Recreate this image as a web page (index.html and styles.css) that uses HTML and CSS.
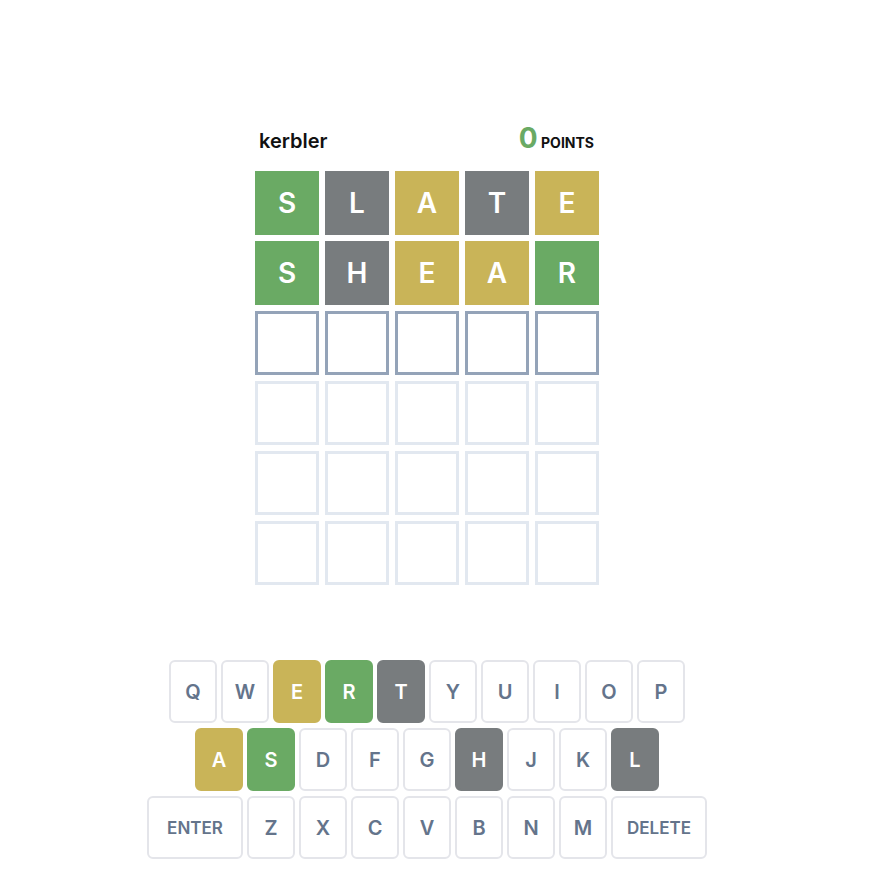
FILE: index.html
```html
<!DOCTYPE html>
<html lang="en">
<head>
  <meta charset="UTF-8">
  <title>Kerbler</title>
  <link rel="stylesheet" href="styles.css">
</head>
<body>
  <div class="app">
    <div class="header">
      <span class="player">kerbler</span>
      <span class="score"><span class="points">0</span> POINTS</span>
    </div>

    <div class="board">
      <div class="tile correct">S</div>
      <div class="tile absent">L</div>
      <div class="tile present">A</div>
      <div class="tile absent">T</div>
      <div class="tile present">E</div>

      <div class="tile correct">S</div>
      <div class="tile absent">H</div>
      <div class="tile present">E</div>
      <div class="tile present">A</div>
      <div class="tile correct">R</div>

      <div class="tile active"></div>
      <div class="tile active"></div>
      <div class="tile active"></div>
      <div class="tile active"></div>
      <div class="tile active"></div>

      <div class="tile"></div>
      <div class="tile"></div>
      <div class="tile"></div>
      <div class="tile"></div>
      <div class="tile"></div>

      <div class="tile"></div>
      <div class="tile"></div>
      <div class="tile"></div>
      <div class="tile"></div>
      <div class="tile"></div>

      <div class="tile"></div>
      <div class="tile"></div>
      <div class="tile"></div>
      <div class="tile"></div>
      <div class="tile"></div>
    </div>

    <div class="keyboard">
      <div class="key-row">
        <button class="key">Q</button>
        <button class="key">W</button>
        <button class="key present">E</button>
        <button class="key correct">R</button>
        <button class="key absent">T</button>
        <button class="key">Y</button>
        <button class="key">U</button>
        <button class="key">I</button>
        <button class="key">O</button>
        <button class="key">P</button>
      </div>
      <div class="key-row">
        <button class="key present">A</button>
        <button class="key correct">S</button>
        <button class="key">D</button>
        <button class="key">F</button>
        <button class="key">G</button>
        <button class="key absent">H</button>
        <button class="key">J</button>
        <button class="key">K</button>
        <button class="key absent">L</button>
      </div>
      <div class="key-row">
        <button class="key wide">ENTER</button>
        <button class="key">Z</button>
        <button class="key">X</button>
        <button class="key">C</button>
        <button class="key">V</button>
        <button class="key">B</button>
        <button class="key">N</button>
        <button class="key">M</button>
        <button class="key wide">DELETE</button>
      </div>
    </div>
  </div>
</body>
</html>
```

FILE: styles.css
```css
body {
  margin: 0;
  font-family: Inter, "Noto Sans", sans-serif;
  background: #fff;
  color: #111;
}
.app {
  width: 854px;
  padding-top: 121px;
}
.header {
  width: 335px;
  margin: 0 auto;
  padding: 0 5px 0 4px;
  display: flex;
  justify-content: space-between;
  align-items: baseline;
}
.player {
  font-size: 20px;
  font-weight: 600;
}
.score {
  font-size: 14px;
  font-weight: 700;
}
.points {
  font-size: 28px;
  color: #6aaa64;
}
.board {
  display: grid;
  grid-template-columns: repeat(5, 64px);
  grid-auto-rows: 64px;
  gap: 6px;
  justify-content: center;
  margin-top: 16px;
}
.tile {
  box-sizing: border-box;
  border: 3px solid #e2e8f0;
  display: flex;
  align-items: center;
  justify-content: center;
  font-size: 28px;
  font-weight: 600;
  color: #fff;
}
.tile.active {
  border-color: #94a3b8;
}
.keyboard {
  margin-top: 75px;
  display: flex;
  flex-direction: column;
  align-items: center;
  gap: 5px;
}
.key-row {
  display: flex;
  gap: 4px;
}
.key {
  box-sizing: border-box;
  width: 48px;
  height: 63px;
  border: 2px solid #e4e5ea;
  border-radius: 6px;
  background: #fff;
  color: #64748b;
  font-family: Inter, "Noto Sans", sans-serif;
  font-size: 20px;
  font-weight: 600;
  padding: 0;
  cursor: pointer;
}
.key.wide {
  width: 96px;
  font-size: 17px;
}
.tile.correct,
.key.correct {
  background: #6aaa64;
  border-color: #6aaa64;
  color: #fff;
}
.tile.present,
.key.present {
  background: #c9b458;
  border-color: #c9b458;
  color: #fff;
}
.tile.absent,
.key.absent {
  background: #787c7e;
  border-color: #787c7e;
  color: #fff;
}
```
